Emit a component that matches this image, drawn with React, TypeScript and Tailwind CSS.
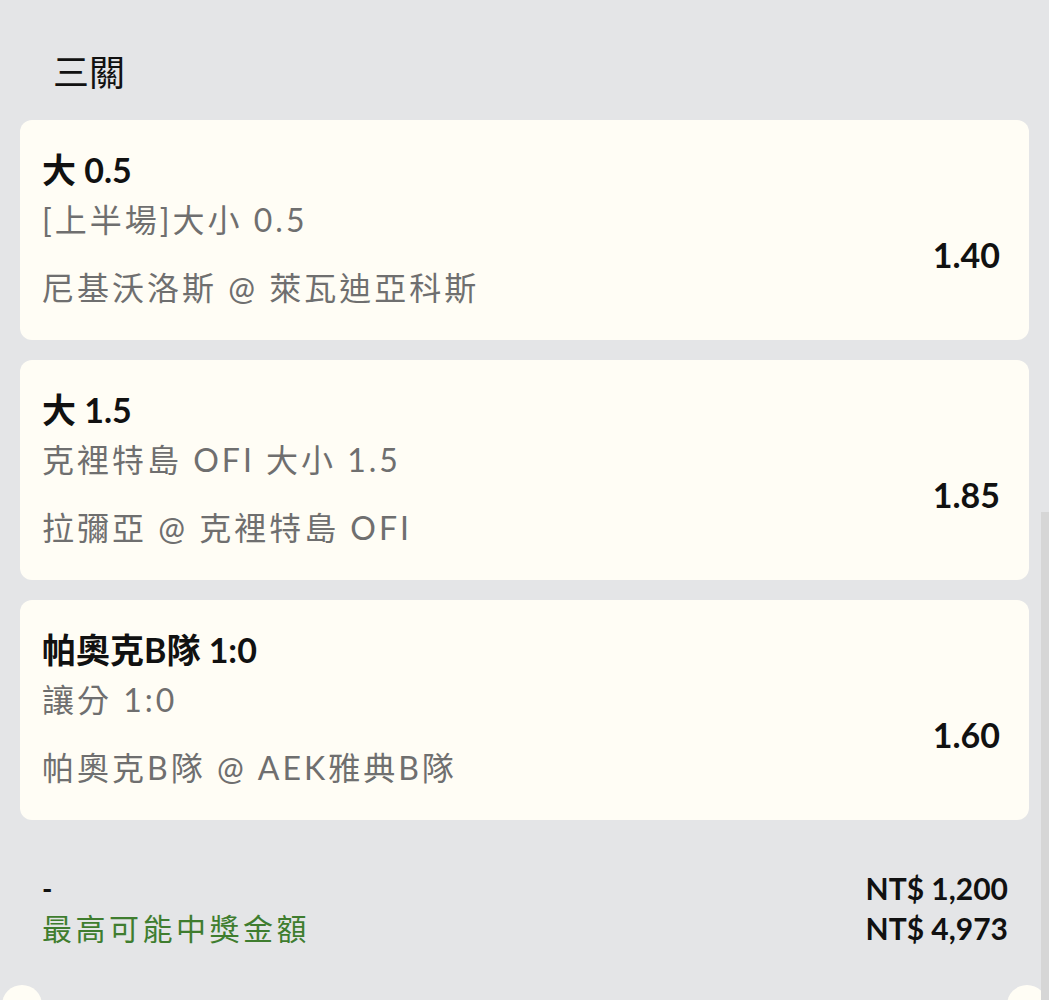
import React from 'react'

interface Leg {
    pick: string
    market: string
    match: string
    odds: string
}

const legs: Leg[] = [
    { pick: '大 0.5', market: '[上半場]大小 0.5', match: '尼基沃洛斯 @ 萊瓦迪亞科斯', odds: '1.40' },
    { pick: '大 1.5', market: '克裡特島 OFI 大小 1.5', match: '拉彌亞 @ 克裡特島 OFI', odds: '1.85' },
    { pick: '帕奧克B隊 1:0', market: '讓分 1:0', match: '帕奧克B隊 @ AEK雅典B隊', odds: '1.60' },
]

const font = "font-['Lato','Noto_Sans_CJK_TC',sans-serif]"

export default function App() {
    return (
        <div className={`relative min-h-screen overflow-hidden bg-[#e4e5e7] text-[#111] ${font}`}>
            <div className="px-5 pt-[54px]">
                {/* Header */}
                <h2 className="pl-[33px] text-[36px] leading-[36px]">三關</h2>

                {/* Legs */}
                <div className="mt-[30px] flex flex-col gap-5">
                    {legs.map((leg, idx) => (
                        <div key={idx} className="rounded-xl bg-[#fffdf5] pl-[22px] pr-[29px] pt-[28px] pb-[24px]">
                            <div className="text-[34px] font-bold leading-[44px] text-[#111]">{leg.pick}</div>
                            <div className="flex items-center justify-between">
                                <div className="text-[32px] tracking-[3px] text-[#6f6f6f]">
                                    <div className="leading-[56px]">{leg.market}</div>
                                    <div className="mt-3 leading-[56px]">{leg.match}</div>
                                </div>
                                <div className="text-[34px] font-bold text-[#111]">{leg.odds}</div>
                            </div>
                        </div>
                    ))}
                </div>

                {/* Totals */}
                <div className="mt-[48px] pl-[22px] pr-[21px]">
                    <div className="flex items-center justify-between leading-[40px]">
                        <span className="text-[28px] font-bold">-</span>
                        <span className="text-[30px] font-bold">NT$ 1,200</span>
                    </div>
                    <div className="flex items-center justify-between leading-[40px]">
                        <span className="text-[30px] tracking-[3.5px] text-[#3f7d2f]">最高可能中獎金額</span>
                        <span className="text-[30px] font-bold">NT$ 4,973</span>
                    </div>
                </div>

                <div className="mt-[37px] flex justify-between -mx-[18px]">
                    <div className="h-10 w-10 rounded-full bg-[#fffdf5]" />
                    <div className="h-10 w-10 rounded-full bg-[#fffdf5]" />
                </div>
            </div>

            {/* scrollbar thumb */}
            <div className="absolute right-0 top-[512px] h-[500px] w-2 bg-[#d6d6d6]" />
        </div>
    )
}
